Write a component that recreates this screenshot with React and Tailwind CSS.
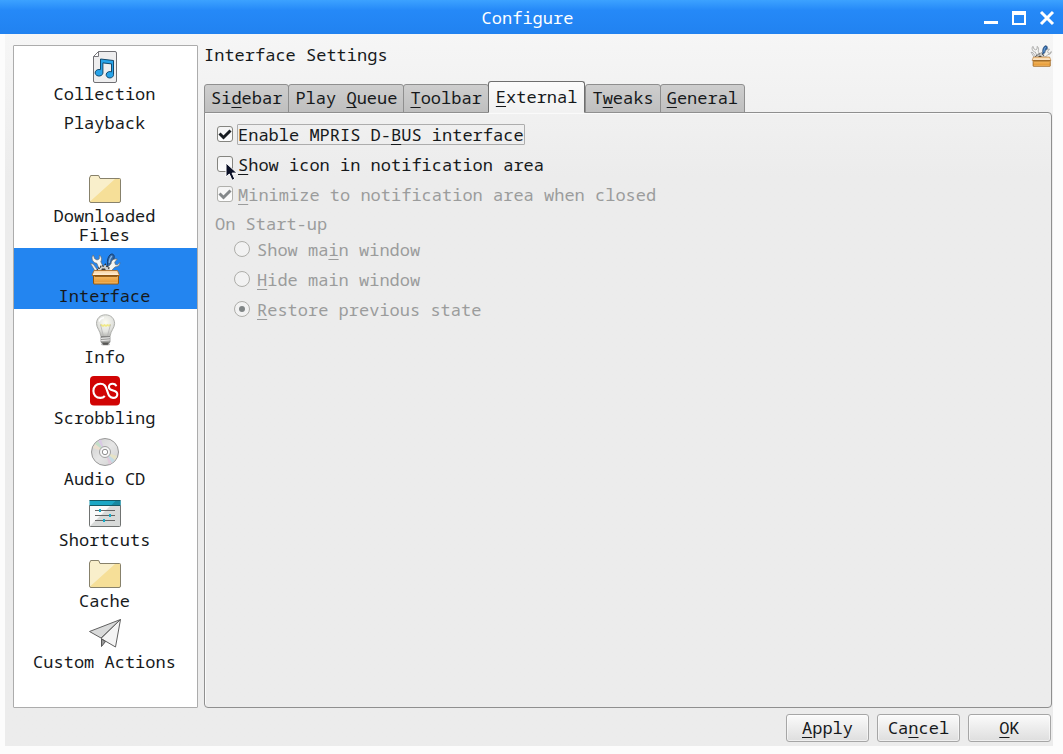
import React, { useState } from 'react';

const CollectionIcon = () => (
  <svg width="32" height="32" viewBox="0 0 32 32" aria-hidden="true">
    <path d="M9.5 .5H26a1.500 1.500 0 0 1 1.500 1.500v28a1.500 1.500 0 0 1-1.500 1.500H6a1.500 1.500 0 0 1-1.500-1.500V5.500z" fill="#eeeeef" stroke="#6f6f73" />
    <path d="M4.500 5.500h5v-5z" fill="#fff" stroke="#77777b" strokeLinejoin="round" />
    <path d="M11.500 8l13 1.500v13.700a3.700 3.200 0 1 1-2-2.300v-8l-8.600-1v10.300a3.900 3.300 0 1 1-2.400-3.500z" fill="#28a4ea" stroke="#12496d" strokeWidth="1" strokeLinejoin="round" />
  </svg>
);

const FolderIcon = () => (
  <svg width="32" height="32" viewBox="0 0 32 32" aria-hidden="true">
    <path d="M.5 28V5l1.200-2.500h8L11 5.500h19.500a1 1 0 0 1 1 1V28a1.500 1.500 0 0 1-1.500 1.500H2A1.500 1.500 0 0 1 .5 28z" fill="#f6df98" />
    <path d="M1 28.500V5l1-2h7.500L11 6h15z" fill="#f9efcb" />
    <path d="M.5 28V5l1.200-2.500h8L11 5.500h19.500a1 1 0 0 1 1 1V28a1.500 1.500 0 0 1-1.500 1.500H2A1.500 1.500 0 0 1 .5 28z" fill="none" stroke="#87816b" />
  </svg>
);

const ToolboxIcon = ({ size = 32 }) => (
  <svg width={size} height={size} viewBox="0 0 32 32" aria-hidden="true">
    <defs>
      <linearGradient id="boxFront" x1="0" y1="0" x2="0" y2="1">
        <stop offset="0" stopColor="#f6bc67" />
        <stop offset="1" stopColor="#e3932b" />
      </linearGradient>
      <linearGradient id="boxTop" x1="0" y1="0" x2="0" y2="1">
        <stop offset="0" stopColor="#f7cd96" />
        <stop offset="1" stopColor="#fff3df" />
      </linearGradient>
    </defs>
    <path d="M1.500 10.500l2.700.5 4.300 6-2.500 1-3-5z" fill="#e9eaeb" stroke="#666" strokeWidth=".6" />
    <path d="M18.500 11c-.5-3.500.5-7.500 2.700-9.300 2.200-1.600 4.300-.2 4 2.700-.3 3.300-1.800 6.300-3.700 7.600l-2 4.500h-2.500z" fill="#2f66a5" stroke="#12305a" strokeWidth=".8" />
    <path d="M23 3c-1.700 1.500-2.600 3.800-2.800 7" fill="none" stroke="#86b4e3" strokeWidth="1.200" />
    <path d="M4.300 2C2.800 3.300 2.600 5.700 3.800 7.700c1 1.600 2.500 2.400 4 2.600l3 7.200h5.400l-4.400-8.700c1.300-2.300.8-5-1.300-6.800l-.3 4-2.200 1-2.300-1.300z" fill="#f6f6f4" stroke="#6b6b69" strokeWidth=".7" strokeLinejoin="round" />
    <path d="M31 9.500L28.300 12l-2-.6-.6-2.200 2.600-3.200c-3.500-.6-6.200 1.400-6.300 4.800L15.500 17.500h7l3.500-3.600c3 .2 5-1.700 5-4.400z" fill="#f4f4f1" stroke="#6b6b69" strokeWidth=".7" strokeLinejoin="round" />
    <path d="M8 18.500l.8-3.500 2.400.4.8-3 2.400.8 2-2 1.400 2.400 2.200.3-.3 2.300 2 .8-.5 1.800z" fill="#cfd0ce" />
    <path d="M8 18l.8-3 2.400.4.8-3 2.400.8 2-2 1.400 2.400 2.200.3-.3 2.300" fill="none" stroke="#2d2d2d" strokeWidth="1.100" strokeDasharray="2 1.200" />
    <path d="M12 17.500l1-2h3l1 2z" fill="#3b3b3a" />
    <path d="M5 17.500h23.500l2 5H3z" fill="url(#boxTop)" stroke="#ad681c" strokeWidth=".8" />
    <path d="M4.500 22.500h25v7.700a.8.8 0 0 1-.8.8H5.300a.8.8 0 0 1-.8-.8z" fill="url(#boxFront)" stroke="#8f540f" />
    <path d="M5.500 23.500h23" stroke="#7f4b0d" strokeWidth=".8" />
    <path d="M5.500 29.900h23" stroke="#fbd28f" strokeWidth=".6" />
  </svg>
);

const BulbIcon = () => (
  <svg width="32" height="32" viewBox="0 0 32 32" aria-hidden="true">
    <defs>
      <radialGradient id="bulbGlass" cx=".5" cy=".35" r=".6">
        <stop offset="0" stopColor="#fbfbf2" />
        <stop offset=".7" stopColor="#e2e3df" />
        <stop offset="1" stopColor="#bfc0bc" />
      </radialGradient>
    </defs>
    <ellipse cx="16.500" cy="30.500" rx="4.500" ry="1" fill="#bbb" />
    <path d="M16.500 .8c-5.500 0-9 3.800-9 8.700 0 4.500 3.500 6.800 4.500 13h9c.9-6.200 4.600-8.500 4.600-13 0-4.900-3.600-8.700-9.100-8.700z" fill="url(#bulbGlass)" stroke="#a9aaa7" strokeWidth=".9" />
    <path d="M11.500 10.500l2.500 1.500 1.500-1 1.500 1 1.500-1 1.500.8 1.500-1.300" fill="none" stroke="#f0e986" strokeWidth="1.600" />
    <path d="M11.500 10.500l2.800 11.500M21.500 10.500l-3 11.500" stroke="#b5b5b5" strokeWidth=".8" />
    <path d="M10 7.500c.8-2.300 2.800-3.600 5-3.800" stroke="#fff" strokeWidth="1.500" fill="none" />
    <path d="M12 22.500h9v5.500l-2 2.500h-5l-2-2.500z" fill="#a2a3a1" stroke="#777" strokeWidth=".7" />
    <path d="M12 24.500l9-.8M12 26.700l9-.8" stroke="#e7e7e7" />
    <path d="M13 28.500h7l-1.500 2.200h-4z" fill="#565654" />
  </svg>
);

const ScrobblingIcon = () => (
  <svg width="32" height="32" viewBox="0 0 32 32" aria-hidden="true">
    <rect x="1" y="1" width="30" height="29.500" rx="4" fill="#d10404" />
    <path d="M15.800 21c-1.100 1.300-2.700 1.900-4.500 1.900-4.100 0-6.900-2.900-6.900-7s2.900-7.200 6.900-7.200c4.300 0 5.500 2.700 6.700 6.500 1.400 4.300 2.200 7.700 6 7.700 2.700 0 4.300-1.500 4.300-3.700 0-4.900-8.400-2.400-8.400-7.200 0-2 1.500-3.300 3.700-3.300 2 0 3.200.8 3.700 2.600" fill="none" stroke="#fff" strokeWidth="2.100" />
  </svg>
);

const DiscIcon = () => (
  <svg width="32" height="32" viewBox="0 0 32 32" aria-hidden="true">
    <defs>
      <linearGradient id="discFace" x1="0" y1="0" x2="1" y2="1">
        <stop offset="0" stopColor="#cdcdcd" />
        <stop offset=".5" stopColor="#e6e6e6" />
        <stop offset="1" stopColor="#cfcfcf" />
      </linearGradient>
    </defs>
    <circle cx="16" cy="16" r="13.500" fill="url(#discFace)" stroke="#999" />
    <path d="M16 16L6 8l3-3z" fill="#c4dfc9" />
    <path d="M16 16L9 5l3-1.500z" fill="#d9c9e4" />
    <path d="M16 16L4 12l2-4z" fill="#ecdfcf" />
    <path d="M16 16l10 8-3 3z" fill="#c4dbe4" />
    <path d="M16 16l7 11-3 1.500z" fill="#e1cadb" />
    <path d="M16 16l12 4-2 4z" fill="#e6e3c6" />
    <circle cx="16" cy="16" r="5.500" fill="#f6f6f6" stroke="#a0a0a0" />
    <circle cx="16" cy="16" r="2.700" fill="#fff" stroke="#909090" />
  </svg>
);

const ShortcutsIcon = () => (
  <svg width="32" height="32" viewBox="0 0 32 32" aria-hidden="true">
    <path d="M.5 3.500h31v26H.5z" fill="#d8dad9" />
    <path d="M1 8h21L1 29z" fill="#fafafa" />
    <path d="M.5 3.500h31v5H.5z" fill="#1ca7c5" />
    <path d="M22 8.500l5-5h4.500v5z" fill="#1788a0" />
    <path d="M.5 8.500h31M.5 3.500h31" stroke="#155965" />
    <path d="M.5 8.500v20a1 1 0 0 0 1 1h29a1 1 0 0 0 1-1v-20" fill="none" stroke="#707372" />
    <path d="M6 13.500h20M6 18.500h20M6 23.500h20" stroke="#666" />
    <path d="M10 12h2v3h-2zM20 17h2v3h-2zM14 22h2v3h-2z" fill="#13afcc" />
  </svg>
);

const PaperPlaneIcon = () => (
  <svg width="32" height="32" viewBox="0 0 32 32" aria-hidden="true">
    <path d="M31.500 .5L.5 12.500 12 19z" fill="#d9dada" stroke="#606060" strokeLinejoin="round" />
    <path d="M31.500 .5L12 19.500l14.500 8.500z" fill="#f4f4f4" stroke="#606060" strokeLinejoin="round" />
    <path d="M12.500 20v7.500l4-5z" fill="#999" stroke="#555" strokeLinejoin="round" />
  </svg>
);

const CursorIcon = () => (
  <svg width="16" height="22" viewBox="0 0 16 22" className="pointer-events-none absolute left-2 top-1.5" aria-hidden="true">
    <path d="M1 1v14l3.300-3 2.700 6.300 2.800-1.200-2.700-6H12z" fill="#0b1026" stroke="#fff" strokeWidth="1" strokeLinejoin="round" />
  </svg>
);

const pages = [
  { name: 'Collection', icon: CollectionIcon },
  { name: 'Playback' },
  { name: 'Downloaded Files', icon: FolderIcon },
  { name: 'Interface', icon: ToolboxIcon },
  { name: 'Info', icon: BulbIcon },
  { name: 'Scrobbling', icon: ScrobblingIcon },
  { name: 'Audio CD', icon: DiscIcon },
  { name: 'Shortcuts', icon: ShortcutsIcon },
  { name: 'Cache', icon: FolderIcon },
  { name: 'Custom Actions', icon: PaperPlaneIcon },
];

// "&" marks the letter used as the keyboard accelerator
const tabs = ['Si&debar', 'Play &Queue', '&Toolbar', '&External', 'T&weaks', '&General'];

const startupOptions = [
  { id: 'show', text: 'Show ma&in window' },
  { id: 'hide', text: '&Hide main window' },
  { id: 'restore', text: '&Restore previous state' },
];

const Mnemonic = ({ text }) => {
  const at = text.indexOf('&');
  if (at < 0) return text;
  return (
    <>
      {text.slice(0, at)}
      <span className="underline decoration-1 underline-offset-3">{text[at + 1]}</span>
      {text.slice(at + 2)}
    </>
  );
};

const CheckRow = ({ text, checked, onChange, disabled, focused, children }) => (
  <label className={`flex h-[30px] items-center gap-1 ${disabled ? 'text-[#9b9c9c]' : ''}`}>
    <span className="relative grid place-items-center">
      <input
        type="checkbox"
        checked={checked}
        onChange={onChange}
        disabled={disabled}
        className={`col-start-1 row-start-1 size-4 appearance-none rounded-[3px] border bg-linear-to-b from-[#f4f4f4] to-[#fdfdfd] outline-none ${
          disabled ? 'border-[#b0b0ac]' : 'border-[#858580]'
        }`}
      />
      {checked && (
        <svg width="16" height="16" viewBox="0 0 16 16" className="pointer-events-none col-start-1 row-start-1" aria-hidden="true">
          <path d="M2.500 7.500L6.500 11.500 13.500 4.500" fill="none" stroke={disabled ? '#84888a' : '#171c20'} strokeWidth="3" />
        </svg>
      )}
      {children}
    </span>
    <span className={`rounded-[1px] border leading-[19px] ${focused ? 'border-[#adadad]' : 'border-transparent'}`}>
      <Mnemonic text={text} />
    </span>
  </label>
);

const DialogButton = ({ text }) => (
  <button
    type="button"
    className="h-7 w-[83px] rounded-[3px] border border-[#a6a6a6] bg-linear-to-b from-[#fbfbfb] to-[#dedede] pb-0.5 shadow-[inset_0_0_0_1px_#ffffff80]"
  >
    <Mnemonic text={text} />
  </button>
);

const App = () => {
  const [page, setPage] = useState('Interface');
  const [tab, setTab] = useState('&External');
  const [mpris, setMpris] = useState(true);
  const [trayIcon, setTrayIcon] = useState(false);

  return (
    <div className="flex min-h-screen flex-col bg-[#fcfcfc] font-['Noto_Sans_Mono','DejaVu_Sans_Mono',monospace] text-[17px] leading-[19px] text-[#16191b]">
      <header className="grid h-[34px] grid-cols-[1fr_auto_1fr] items-center bg-linear-to-b from-[#3ca2ff] via-[#2589f8] via-30% to-[#2182f0] pr-2 text-white">
        <h1 className="col-start-2">Configure</h1>
        <div className="flex justify-end gap-3 pt-0.5">
          <button type="button" aria-label="Minimize">
            <svg width="16" height="16" viewBox="0 0 16 16"><path d="M1 12.500h14" stroke="#fff" strokeWidth="3" /></svg>
          </button>
          <button type="button" aria-label="Maximize">
            <svg width="16" height="16" viewBox="0 0 16 16"><path d="M1 1h14v14H1zM3 5v8h10V5z" fill="#fff" fillRule="evenodd" /></svg>
          </button>
          <button type="button" aria-label="Close">
            <svg width="16" height="16" viewBox="0 0 16 16"><path d="M2 2l12 12M14 2L2 14" stroke="#fff" strokeWidth="3" /></svg>
          </button>
        </div>
      </header>

      <div className="mr-2.5 mb-2 ml-[5px] flex grow flex-col bg-linear-to-b from-[#f6f6f6] to-[#ececec] to-20% pr-px pl-2">
        <div className="flex grow gap-1.5 pt-[11px]">
          <nav className="w-[185px] shrink-0 rounded-[1px] border border-[#acacac] bg-white">
            {pages.map(({ name, icon: Icon }) => (
              <button
                key={name}
                type="button"
                onClick={() => setPage(name)}
                aria-current={page === name ? 'page' : undefined}
                className={`flex min-h-[61px] w-full flex-col items-center gap-px pr-0.5 pb-1 ${Icon ? 'pt-[5px]' : 'pt-1.5'} ${
                  page === name ? 'bg-[#2385f0]' : ''
                }`}
              >
                {Icon && <Icon />}
                <span className="max-w-[150px]">{name}</span>
              </button>
            ))}
          </nav>

          <main className="flex grow flex-col">
            <div className="flex h-9 items-start justify-between">
              <h2>Interface Settings</h2>
              <ToolboxIcon size={22} />
            </div>

            <div role="tablist" className="z-10 -mb-px flex items-end">
              {tabs.map((name) => (
                <button
                  key={name}
                  type="button"
                  role="tab"
                  aria-selected={tab === name}
                  onClick={() => setTab(name)}
                  className={`rounded-t-[3px] border pb-0.5 ${
                    tab === name
                      ? 'h-8 border-[#6f6f6f] border-b-[#f2f2f2] bg-linear-to-b from-[#fbfbfb] to-[#f1f1f1] px-[7px]'
                      : '-mr-px h-[29px] border-[#8f8f8f] bg-linear-to-b from-[#cecece] to-[#bfbfbf] px-1.5'
                  }`}
                >
                  <Mnemonic text={name} />
                </button>
              ))}
            </div>

            <section role="tabpanel" className="grow rounded-b-[4px] rounded-tr-[4px] border border-[#8f8f8f] px-3 pt-1.5 shadow-[inset_1px_1px_0_#fafafa]">
              <CheckRow text="Enable MPRIS D-&BUS interface" checked={mpris} onChange={() => setMpris(!mpris)} focused />
              <CheckRow text="&Show icon in notification area" checked={trayIcon} onChange={() => setTrayIcon(!trayIcon)}>
                <CursorIcon />
              </CheckRow>
              <CheckRow text="&Minimize to notification area when closed" checked onChange={() => {}} disabled />

              <fieldset disabled className="-ml-0.5 text-[#9b9c9c]">
                <legend className="pt-[5px] pb-px">On Start-up</legend>
                {startupOptions.map(({ id, text }) => (
                  <label key={id} className="flex h-[30px] items-center gap-[7px] pl-[19px]">
                    <span className="grid place-items-center">
                      <input
                        type="radio"
                        name="startup"
                        defaultChecked={id === 'restore'}
                        className="peer col-start-1 row-start-1 size-4 appearance-none rounded-full border border-[#aeaeaa] bg-[#f2f2f2]"
                      />
                      <span className="col-start-1 row-start-1 hidden size-1.5 rounded-full bg-[#808586] peer-checked:block"></span>
                    </span>
                    <span><Mnemonic text={text} /></span>
                  </label>
                ))}
              </fieldset>
            </section>
          </main>
        </div>

        <footer className="flex justify-end gap-2 pt-1.5 pr-px pb-1">
          <DialogButton text="&Apply" />
          <DialogButton text="Ca&ncel" />
          <DialogButton text="&OK" />
        </footer>
      </div>
    </div>
  );
};

export default App;
